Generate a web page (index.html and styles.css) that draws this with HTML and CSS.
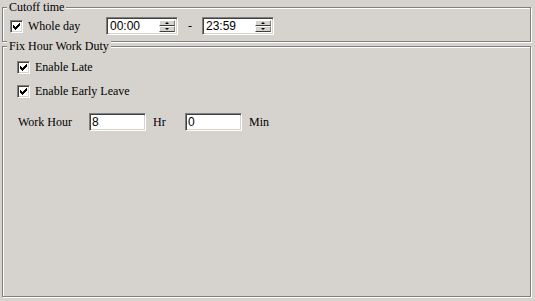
FILE: index.html
```html
<!DOCTYPE html>
<html lang="en">
<head>
    <meta charset="UTF-8">
    <title>Cutoff time</title>
    <link rel="stylesheet" href="styles.css">
</head>
<body>
    <fieldset class="group cutoff">
        <legend>Cutoff time</legend>
        <div class="row">
            <label class="check whole">
                <span class="box"><svg width="7" height="7" viewBox="0 0 7 7"><path d="M0 2h1v3h-1z M1 3h1v3h-1z M2 4h1v3h-1z M3 3h1v3h-1z M4 2h1v3h-1z M5 1h1v3h-1z M6 0h1v3h-1z"/></svg></span>
                Whole day
            </label>
            <div class="spinbox">
                <input type="text" value="00:00">
                <span class="spin"><span class="btn up"></span><span class="btn down"></span></span>
            </div>
            <span class="dash">-</span>
            <div class="spinbox">
                <input type="text" value="23:59">
                <span class="spin"><span class="btn up"></span><span class="btn down"></span></span>
            </div>
        </div>
    </fieldset>

    <fieldset class="group duty">
        <legend>Fix Hour Work Duty</legend>
        <label class="check">
            <span class="box"><svg width="7" height="7" viewBox="0 0 7 7"><path d="M0 2h1v3h-1z M1 3h1v3h-1z M2 4h1v3h-1z M3 3h1v3h-1z M4 2h1v3h-1z M5 1h1v3h-1z M6 0h1v3h-1z"/></svg></span>
            Enable Late
        </label>
        <label class="check early">
            <span class="box"><svg width="7" height="7" viewBox="0 0 7 7"><path d="M0 2h1v3h-1z M1 3h1v3h-1z M2 4h1v3h-1z M3 3h1v3h-1z M4 2h1v3h-1z M5 1h1v3h-1z M6 0h1v3h-1z"/></svg></span>
            Enable Early Leave
        </label>
        <div class="row hours">
            <span class="lbl">Work Hour</span>
            <input class="field" type="text" value="8">
            <span class="unit">Hr</span>
            <input class="field" type="text" value="0">
            <span class="unit">Min</span>
        </div>
    </fieldset>
</body>
</html>
```

FILE: styles.css
```css
body {
    margin: 0;
    width: 535px;
    height: 301px;
    overflow: hidden;
    background: #d6d3ce;
    font-family: "Liberation Serif", serif;
    font-size: 12px;
    color: #000;
}
.group {
    box-sizing: border-box;
    min-width: 0;
    margin: 0 4px 0 2px;
    border: 1px solid #808080;
    box-shadow: inset 1px 1px 0 #fff, 1px 1px 0 #fff;
}
.group legend {
    padding: 0 2px;
    line-height: 12px;
    background: #d6d3ce;
}
.cutoff {
    margin-top: 1px;
    padding: 4px 7px 6px 7px;
}
.cutoff legend {
    margin-left: -3px;
}
.duty {
    margin-top: -2px;
    height: 257px;
    padding: 9px 14px 0 14px;
}
.duty legend {
    margin-left: -10px;
}
.row {
    display: flex;
    align-items: center;
    height: 18px;
}
.check {
    display: flex;
    align-items: center;
    gap: 5px;
    height: 13px;
    line-height: 13px;
}
.check.whole {
    width: 96px;
}
.check.early {
    margin-top: 11px;
}
.box {
    box-sizing: border-box;
    width: 13px;
    height: 13px;
    display: flex;
    align-items: center;
    justify-content: center;
    background: #fff;
    border: 1px solid;
    border-color: #808080 #fff #fff #808080;
    box-shadow: inset 1px 1px 0 #404040, inset -1px -1px 0 #d6d3ce;
}
.box svg {
    display: block;
    shape-rendering: crispEdges;
}
.spinbox, .field {
    box-sizing: border-box;
    height: 18px;
    background: #fff;
    border: 1px solid;
    border-color: #808080 #fff #fff #808080;
    box-shadow: inset 1px 1px 0 #404040, inset -1px -1px 0 #d6d3ce;
}
.spinbox {
    width: 72px;
    display: flex;
    padding: 2px;
}
.spinbox input, .field {
    font-family: "Liberation Sans", sans-serif;
    font-size: 12px;
    color: #000;
    outline: none;
}
.spinbox input {
    flex: 1;
    min-width: 0;
    border: none;
    padding: 0 0 0 1px;
    background: transparent;
}
.spin {
    width: 16px;
    display: flex;
    flex-direction: column;
}
.spin .btn {
    flex: 1;
    box-sizing: border-box;
    display: flex;
    align-items: center;
    justify-content: center;
    background: #d6d3ce;
    border-top: 1px solid #fff;
    border-left: 1px solid #fff;
    border-right: 1px solid #808080;
    border-bottom: 1px solid #404040;
}
.spin .btn::after {
    content: "";
    width: 0;
    height: 0;
    border-left: 2px solid transparent;
    border-right: 2px solid transparent;
}
.spin .up::after {
    border-bottom: 2px solid #000;
}
.spin .down::after {
    border-top: 2px solid #000;
}
.dash {
    width: 24px;
    text-align: center;
}
.hours {
    margin-top: 15px;
    margin-left: 1px;
}
.lbl {
    width: 71px;
}
.field {
    width: 57px;
    padding: 0 0 0 2px;
}
.unit {
    margin-left: 7px;
    width: 32px;
}
```
